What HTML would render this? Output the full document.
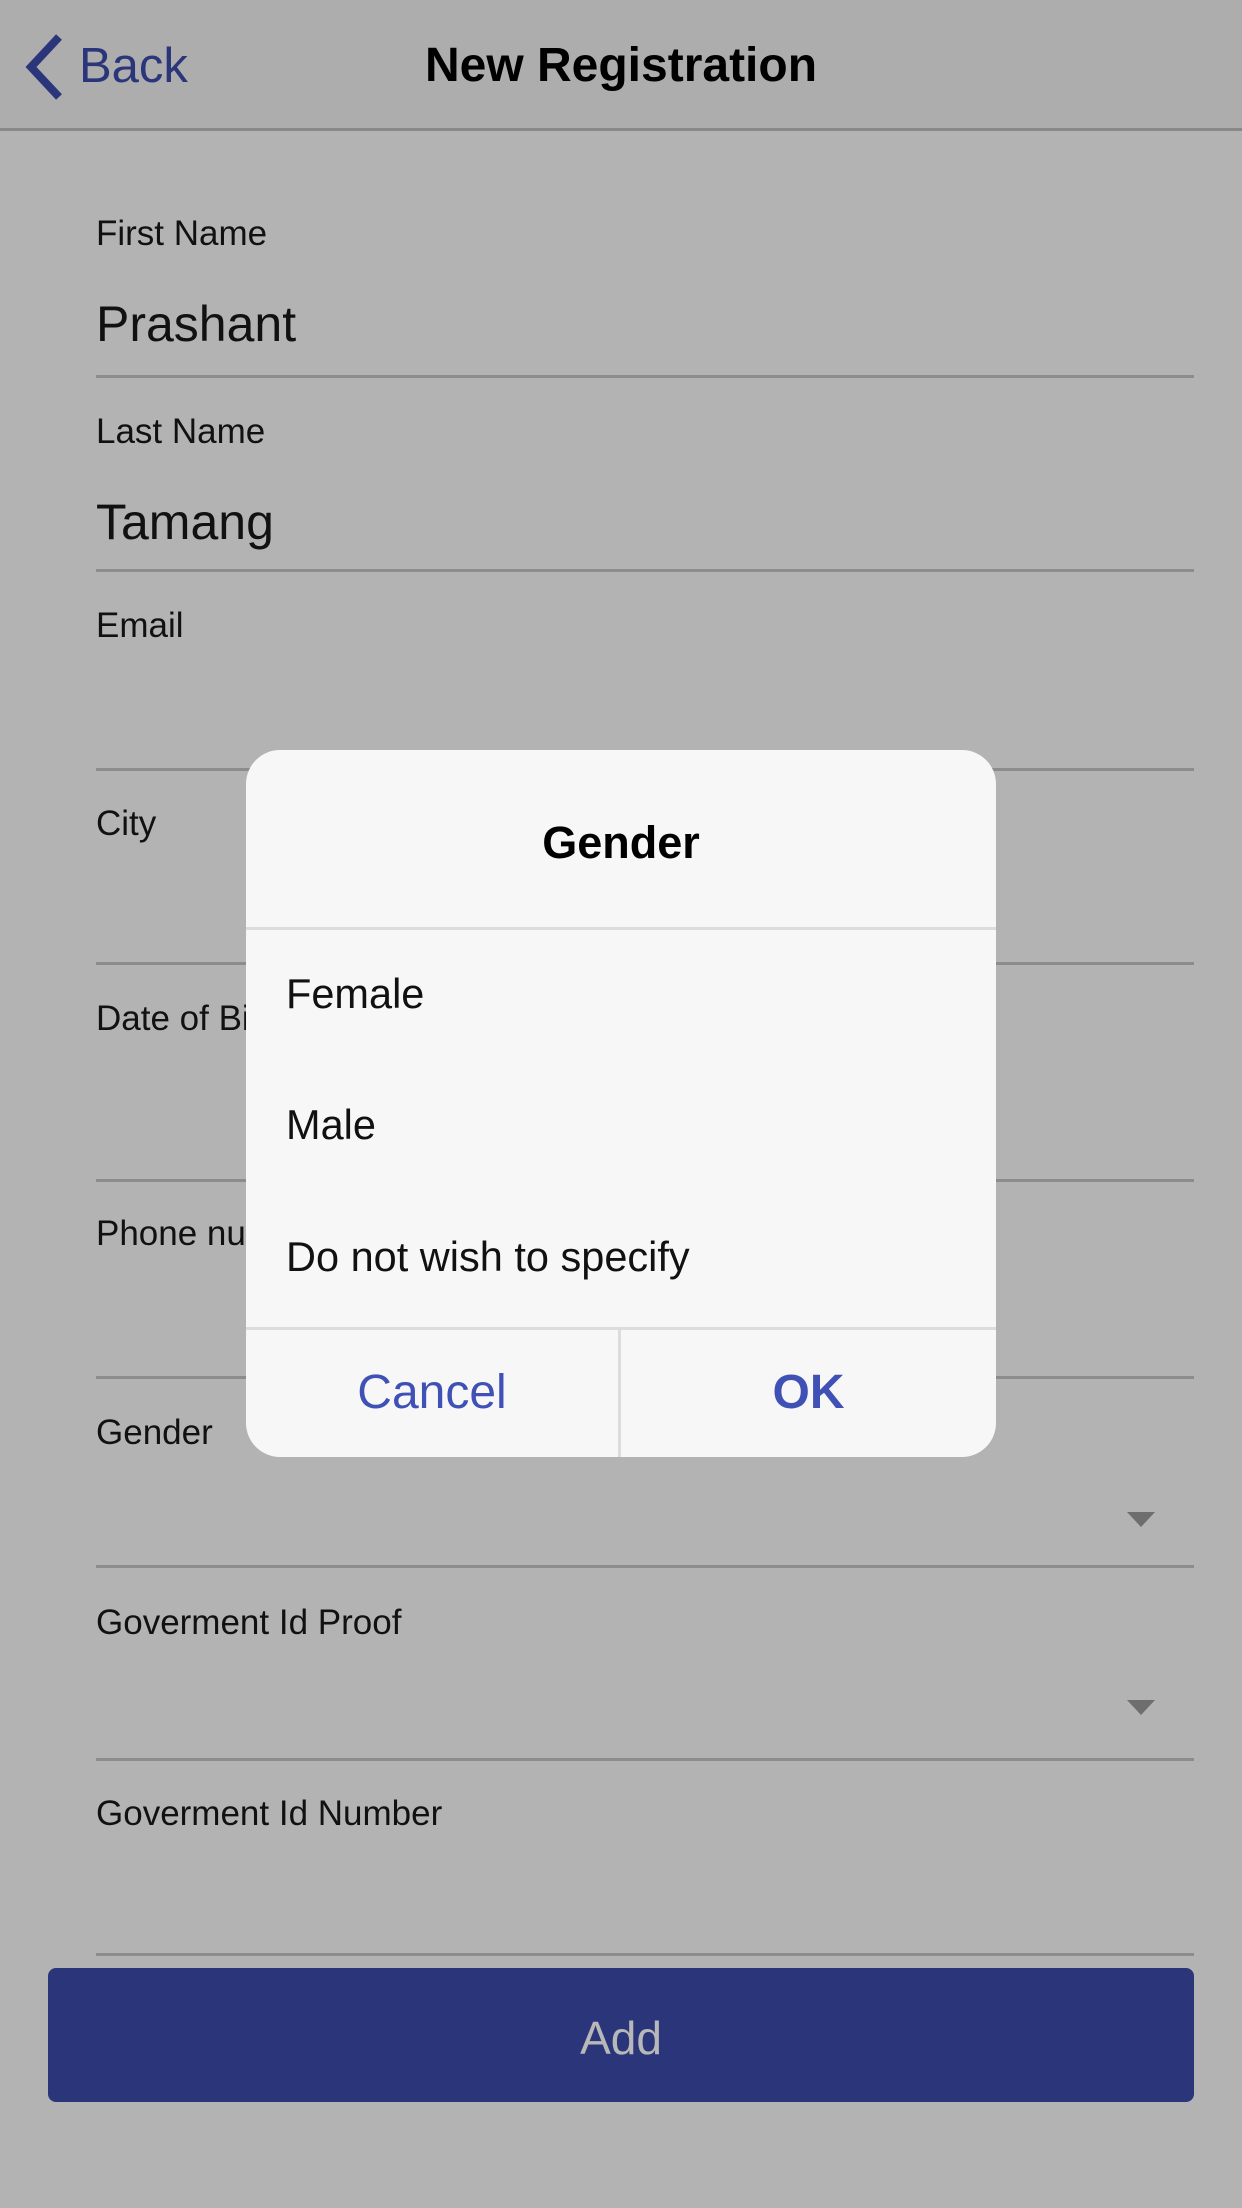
<!DOCTYPE html>
<html><head><meta charset="utf-8"><style>
*{margin:0;padding:0;box-sizing:border-box}
body{width:1242px;height:2208px;background:#b3b3b3;position:relative;overflow:hidden;font-family:"Liberation Sans",sans-serif}
.t{position:absolute;white-space:nowrap;line-height:1}
.lbl{left:96px;font-size:35px;color:#111}
.val{left:96px;font-size:50px;color:#111}
.ln{position:absolute;left:96px;width:1098px;height:3px;background:#8c8c8c}
.arr{position:absolute;left:1127px;width:0;height:0;border-left:14px solid transparent;border-right:14px solid transparent;border-top:15px solid #6e6e6e}
.hdr{position:absolute;left:0;top:0;width:1242px;height:131px;background:#adadad;border-bottom:3px solid #888}
.dlg{position:absolute;left:246px;top:750px;width:750px;height:707px;background:#f7f7f7;border-radius:34px;overflow:hidden}
.dl{position:absolute;left:0;width:750px;height:3px;background:#dcdcdc}
</style></head><body>
<div class="hdr"></div>
<svg style="position:absolute;left:22px;top:34px" width="44" height="66" viewBox="0 0 44 66"><path d="M37 3 L9 33 L37 63" fill="none" stroke="#2b367a" stroke-width="8"/></svg>
<div class="t" style="left:79px;top:42px;font-size:49px;color:#2b367a">Back</div>
<div class="t" style="left:0;width:1242px;text-align:center;top:42px;font-size:48px;font-weight:bold;color:#000">New Registration</div>

<div class="t lbl" style="top:216px">First Name</div>
<div class="t val" style="top:299px">Prashant</div>
<div class="ln" style="top:375px"></div>
<div class="t lbl" style="top:414px">Last Name</div>
<div class="t val" style="top:497px">Tamang</div>
<div class="ln" style="top:569px"></div>
<div class="t lbl" style="top:608px">Email</div>
<div class="ln" style="top:768px"></div>
<div class="t lbl" style="top:806px">City</div>
<div class="ln" style="top:962px"></div>
<div class="t lbl" style="top:1001px">Date of Birth</div>
<div class="ln" style="top:1179px"></div>
<div class="t lbl" style="top:1216px">Phone number</div>
<div class="ln" style="top:1376px"></div>
<div class="t lbl" style="top:1415px">Gender</div>
<div class="arr" style="top:1512px"></div>
<div class="ln" style="top:1565px"></div>
<div class="t lbl" style="top:1605px">Goverment Id Proof</div>
<div class="arr" style="top:1700px"></div>
<div class="ln" style="top:1758px"></div>
<div class="t lbl" style="top:1796px">Goverment Id Number</div>
<div class="ln" style="top:1953px"></div>

<div style="position:absolute;left:48px;top:1968px;width:1146px;height:134px;background:#2b367a;border-radius:8px"></div>
<div class="t" style="left:48px;width:1146px;text-align:center;top:2015px;font-size:46px;color:#b8b8b8">Add</div>

<div class="dlg">
  <div class="t" style="left:0;width:750px;text-align:center;top:70px;font-size:45px;font-weight:bold;color:#000">Gender</div>
  <div class="dl" style="top:177px"></div>
  <div class="t" style="left:40px;top:223px;font-size:41.5px;color:#111">Female</div>
  <div class="t" style="left:40px;top:354px;font-size:41.5px;color:#111">Male</div>
  <div class="t" style="left:40px;top:486px;font-size:41.5px;color:#111">Do not wish to specify</div>
  <div class="dl" style="top:577px"></div>
  <div style="position:absolute;left:372px;top:578px;width:3px;height:130px;background:#dcdcdc"></div>
  <div class="t" style="left:0;width:372px;text-align:center;top:619px;font-size:48px;color:#3f51b5">Cancel</div>
  <div class="t" style="left:375px;width:375px;text-align:center;top:619px;font-size:48px;font-weight:bold;color:#3f51b5">OK</div>
</div>
</body></html>
